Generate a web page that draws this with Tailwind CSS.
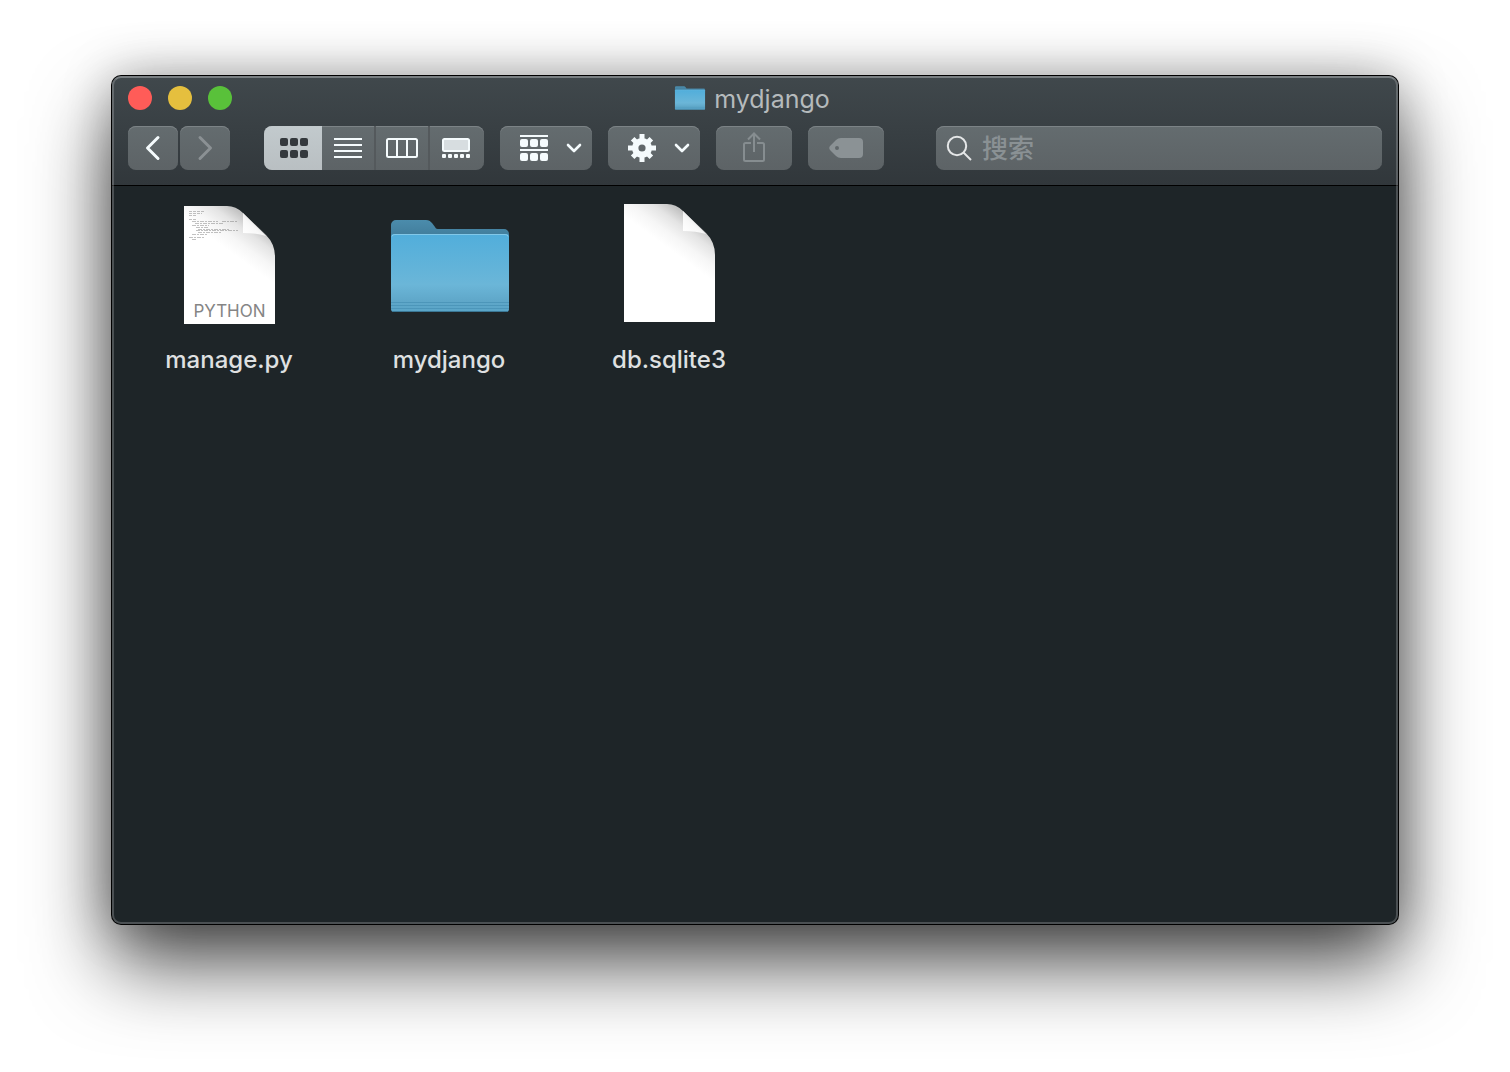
<!DOCTYPE html>
<html lang="zh-CN">
<head>
<meta charset="utf-8">
<meta name="viewport" content="width=device-width, initial-scale=1">
<title>mydjango</title>
<script src="https://cdn.jsdelivr.net/npm/@tailwindcss/browser@4"></script>
</head>
<body class="flex min-h-screen bg-white px-28 pt-[76px] pb-[148px] font-['Inter','Noto_Sans_CJK_SC',sans-serif]">
<svg class="absolute size-0" aria-hidden="true">
  <defs>
    <linearGradient id="front" x1="0" y1="0" x2="0" y2="1">
      <stop offset="0" stop-color="#51aedb"/><stop offset=".65" stop-color="#6bb6d8"/><stop offset=".86" stop-color="#5fa7c9"/><stop offset="1" stop-color="#5aa5c8"/>
    </linearGradient>
    <linearGradient id="back" x1="0" y1="0" x2="0" y2="1">
      <stop offset="0" stop-color="#4b8cac"/><stop offset="1" stop-color="#3d7693"/>
    </linearGradient>
    <linearGradient id="paper" x1="74" y1="20" x2="52" y2="50" gradientUnits="userSpaceOnUse">
      <stop offset="0" stop-color="#c4c4c4"/><stop offset=".3" stop-color="#e4e4e4"/><stop offset=".65" stop-color="#f6f6f6"/><stop offset="1" stop-color="#fff"/>
    </linearGradient>
    <linearGradient id="fold" x1="59" y1="28" x2="72" y2="14" gradientUnits="userSpaceOnUse">
      <stop offset="0" stop-color="#fff"/><stop offset=".6" stop-color="#f8f8f8"/><stop offset="1" stop-color="#e6e6e6"/>
    </linearGradient>
    <symbol id="folder" viewBox="0 0 120 94">
      <path d="M1 20V6a5 5 0 0 1 5-5h30c3 0 4 1 6 3l3 4c1 2 2 2 4 2h65a5 5 0 0 1 5 5v10H1z" fill="url(#back)"/>
      <rect x="1" y="15" width="118" height="78" rx="3" fill="url(#front)"/>
      <path d="M2 17.500q0-2 3-2h110q3 0 3 2" fill="none" stroke="#82c8e8"/>
      <path d="M1 83.500h118M1 86.500h118M1 89.500h118" stroke="#4790b4" stroke-opacity=".75"/>
      <path d="M2 92.500h116" stroke="#3b7896"/>
    </symbol>
    <symbol id="page" viewBox="0 0 91 118">
      <path d="M0 0h43q9 0 16 7l23 22q9 9 9 22v67H0z" fill="url(#paper)"/>
      <path d="M59 7v20q13 0 23 3z" fill="url(#fold)"/>
    </symbol>
    <symbol id="chevron" viewBox="0 0 16 10"><path d="M2 2l6 6 6-6" fill="none" stroke="currentColor" stroke-width="2.600" stroke-linecap="round" stroke-linejoin="round"/></symbol>
  </defs>
</svg>

<main class="relative flex min-w-0 flex-1 flex-col rounded-[9px] bg-[#1e2528] shadow-[0_0_0_1px_#000,0_0_50px_rgba(0,0,0,0.28),0_40px_80px_rgba(0,0,0,0.7)]">
  <header class="rounded-t-[9px] border-b border-black bg-linear-to-b from-[#40484c] to-[#31373b] px-4 pt-[10px] pb-[15px]">
    <div class="grid h-6 grid-cols-[1fr_auto_1fr] items-center">
      <div class="flex gap-4">
        <button class="size-6 rounded-full bg-[#ff5c58]" aria-label="关闭"></button>
        <button class="size-6 rounded-full bg-[#e5bf3e]" aria-label="最小化"></button>
        <button class="size-6 rounded-full bg-[#59c13a]" aria-label="缩放"></button>
      </div>
      <h1 class="flex h-6 items-center gap-2 pr-1.5 text-[25px] leading-[22px] text-[#b5babc]">
        <svg class="h-6 w-8" aria-hidden="true"><use href="#folder"/></svg><span class="pt-0.5">mydjango</span>
      </h1>
    </div>

    <div class="mt-4 flex h-11 text-[#f5fbfd]">
      <nav class="flex gap-0.5">
        <button class="flex w-[50px] items-center justify-center rounded-lg bg-linear-to-b from-[#646c6f] to-[#5d6366] shadow-[inset_0_1px_0_#7c8386]" aria-label="后退">
          <svg width="16" height="26" viewBox="0 0 16 26" fill="none" stroke="currentColor" stroke-width="3" stroke-linecap="round" stroke-linejoin="round"><path d="M13 2.500L2.500 13 13 23.500"/></svg>
        </button>
        <button class="flex w-[50px] items-center justify-center rounded-lg bg-linear-to-b from-[#646c6f] to-[#5d6366] text-[#8b9194] shadow-[inset_0_1px_0_#7c8386]" aria-label="前进" disabled>
          <svg width="16" height="26" viewBox="0 0 16 26" fill="none" stroke="currentColor" stroke-width="3" stroke-linecap="round" stroke-linejoin="round"><path d="M3 2.500L13.500 13 3 23.500"/></svg>
        </button>
      </nav>

      <div class="ml-[34px] flex overflow-hidden rounded-lg bg-linear-to-b from-[#646c6f] to-[#5d6366] shadow-[inset_0_1px_0_#7c8386]">
        <button class="flex w-[58px] items-center justify-center bg-linear-to-b from-[#c2cacd] to-[#b9bfc2] pl-0.5 text-[#34393d]" aria-label="图标" aria-pressed="true">
          <svg width="28" height="20" viewBox="0 0 28 20" fill="currentColor"><rect width="8" height="8" rx="2"/><rect x="10" width="8" height="8" rx="2"/><rect x="20" width="8" height="8" rx="2"/><rect y="12" width="8" height="8" rx="2"/><rect x="10" y="12" width="8" height="8" rx="2"/><rect x="20" y="12" width="8" height="8" rx="2"/></svg>
        </button>
        <button class="flex w-[54px] items-center justify-center border-r-2 border-[#54595c]" aria-label="列表">
          <svg width="28" height="20" viewBox="0 0 28 20" fill="currentColor"><path d="M0 0h28v2H0zM0 6h28v2H0zM0 12h28v2H0zM0 18h28v2H0z"/></svg>
        </button>
        <button class="flex w-[54px] items-center justify-center border-r-2 border-[#54595c]" aria-label="分栏">
          <svg width="32" height="20" viewBox="0 0 32 20" fill="none" stroke="currentColor" stroke-width="2"><rect x="1" y="1" width="30" height="18" rx="1.500"/><path d="M11 1v18M21 1v18"/></svg>
        </button>
        <button class="flex w-[54px] items-center justify-center pr-0.5" aria-label="画廊">
          <svg width="28" height="20" viewBox="0 0 28 20" fill="currentColor"><rect x="1" y="1" width="26" height="12" rx="1.500" fill="#d7dde0" stroke="currentColor" stroke-width="2"/><rect y="16" width="4" height="4" rx="1"/><rect x="6" y="16" width="4" height="4" rx="1"/><rect x="12" y="16" width="4" height="4" rx="1"/><rect x="18" y="16" width="4" height="4" rx="1"/><rect x="24" y="16" width="4" height="4" rx="1"/></svg>
        </button>
      </div>

      <button class="ml-4 flex w-[92px] items-center justify-between rounded-lg bg-linear-to-b from-[#646c6f] to-[#5d6366] pr-[10px] pl-5 shadow-[inset_0_1px_0_#7c8386]" aria-label="分组">
        <svg width="28" height="26" viewBox="0 0 28 26" fill="currentColor"><path d="M0 0h28v2H0zM0 14h28v2H0z"/><rect y="4" width="8" height="8" rx="2"/><rect x="10" y="4" width="8" height="8" rx="2"/><rect x="20" y="4" width="8" height="8" rx="2"/><rect y="18" width="8" height="8" rx="2"/><rect x="10" y="18" width="8" height="8" rx="2"/><rect x="20" y="18" width="8" height="8" rx="2"/></svg>
        <svg class="h-[10px] w-4"><use href="#chevron"/></svg>
      </button>
      <button class="ml-4 flex w-[92px] items-center justify-between rounded-lg bg-linear-to-b from-[#646c6f] to-[#5d6366] pr-[10px] pl-5 shadow-[inset_0_1px_0_#7c8386]" aria-label="操作">
        <svg width="28" height="28" viewBox="-14 -14 28 28" fill="none" stroke="currentColor"><circle r="6.800" stroke-width="6.400"/><g stroke-width="5"><path d="M0-14v5M0 9v5M-14 0h5M9 0h5"/><path d="M0-13.200v5M0 8.200v5M-13.200 0h5M8.200 0h5" transform="rotate(45)"/></g></svg>
        <svg class="h-[10px] w-4"><use href="#chevron"/></svg>
      </button>
      <button class="ml-4 flex w-[76px] items-center justify-center rounded-lg bg-linear-to-b from-[#646c6f] to-[#5d6366] pb-0.5 text-[#868d90] shadow-[inset_0_1px_0_#7c8386]" aria-label="共享" disabled>
        <svg width="22" height="30" viewBox="0 0 22 30" fill="none" stroke="currentColor" stroke-width="2"><path d="M8 11H2.500Q1 11 1 12.500v15Q1 29 2.500 29h17q1.500 0 1.500-1.500v-15Q21 11 19.500 11H14M11 20V2M5 7.500L11 1.500l6 6"/></svg>
      </button>
      <button class="ml-4 flex w-[76px] items-center justify-center rounded-lg bg-linear-to-b from-[#646c6f] to-[#5d6366] text-[#8b9295] shadow-[inset_0_1px_0_#7c8386]" aria-label="标签" disabled>
        <svg width="34" height="20" viewBox="0 0 34 20" fill="currentColor"><path fill-rule="evenodd" d="M12 0h18q4 0 4 4v12q0 4-4 4H12q-3 0-5-2l-6-6q-1.500-2 0-4l6-6q2-2 5-2zM8 8a2 2 0 1 0 0 4 2 2 0 0 0 0-4z"/></svg>
      </button>

      <label class="ml-[52px] flex min-w-0 flex-1 items-center gap-[10px] rounded-lg bg-linear-to-b from-[#646c6f] to-[#5d6366] pr-3 pl-[10px] shadow-[inset_0_1px_0_#7c8386]">
        <svg class="shrink-0" width="26" height="26" viewBox="0 0 26 26" fill="none" stroke="#e4e6e7" stroke-width="2"><circle cx="11" cy="11" r="9.200"/><path d="M17.500 17.500L25 25"/></svg>
        <input type="search" placeholder="搜索" aria-label="搜索" class="h-9 w-full min-w-0 bg-transparent text-[26px] font-medium text-[#f5fbfd] outline-none placeholder:text-[#8a9194]">
      </label>
    </div>
  </header>

  <ul class="grid grid-cols-[repeat(auto-fill,220px)] pt-[14px] pl-[7px] text-2xl font-medium text-[#dfe0e1]">
    <li class="flex flex-col items-center">
      <a href="#" class="flex flex-col items-center">
        <span class="flex h-32 items-center pt-0.5 pl-0.5">
          <svg width="91" height="118" viewBox="0 0 91 118" aria-hidden="true">
            <use href="#page"/>
            <g fill="none" stroke="#777" stroke-opacity=".45" stroke-width="1">
              <path d="M5 5.500h15M5 7.500h13M5 9.500h7M5 13.500h8" stroke-dasharray="3 1"/>
              <path d="M8 15.500h26M38 15.500h15M11 17.500h29M8 19.500h17M12 21.500h13M14 23.500h32M12 24.500h42M14 26.500h23M8 28.500h15M5 31.500h15M8 33.500h4" stroke-dasharray="4 1 2 1"/>
            </g>
            <text x="45.500" y="111" text-anchor="middle" font-family="Inter, sans-serif" font-size="17" font-weight="400" fill="#858585">PYTHON</text>
          </svg>
        </span>
        <span class="mt-4 leading-8">manage.py</span>
      </a>
    </li>
    <li class="flex flex-col items-center">
      <a href="#" class="flex flex-col items-center">
        <span class="flex h-32 items-center pt-1 pl-0.5"><svg class="h-[94px] w-[120px]" aria-hidden="true"><use href="#folder"/></svg></span>
        <span class="mt-4 leading-8">mydjango</span>
      </a>
    </li>
    <li class="flex flex-col items-center">
      <a href="#" class="flex flex-col items-center">
        <span class="flex h-32 items-center pb-0.5 pl-0.5"><svg class="h-[118px] w-[91px]" aria-hidden="true"><use href="#page"/></svg></span>
        <span class="mt-4 leading-8">db.sqlite3</span>
      </a>
    </li>
  </ul>
  <div class="pointer-events-none absolute inset-0 rounded-[9px] border-2 border-white/20 border-t-white/30"></div>
</main>
</body>
</html>
